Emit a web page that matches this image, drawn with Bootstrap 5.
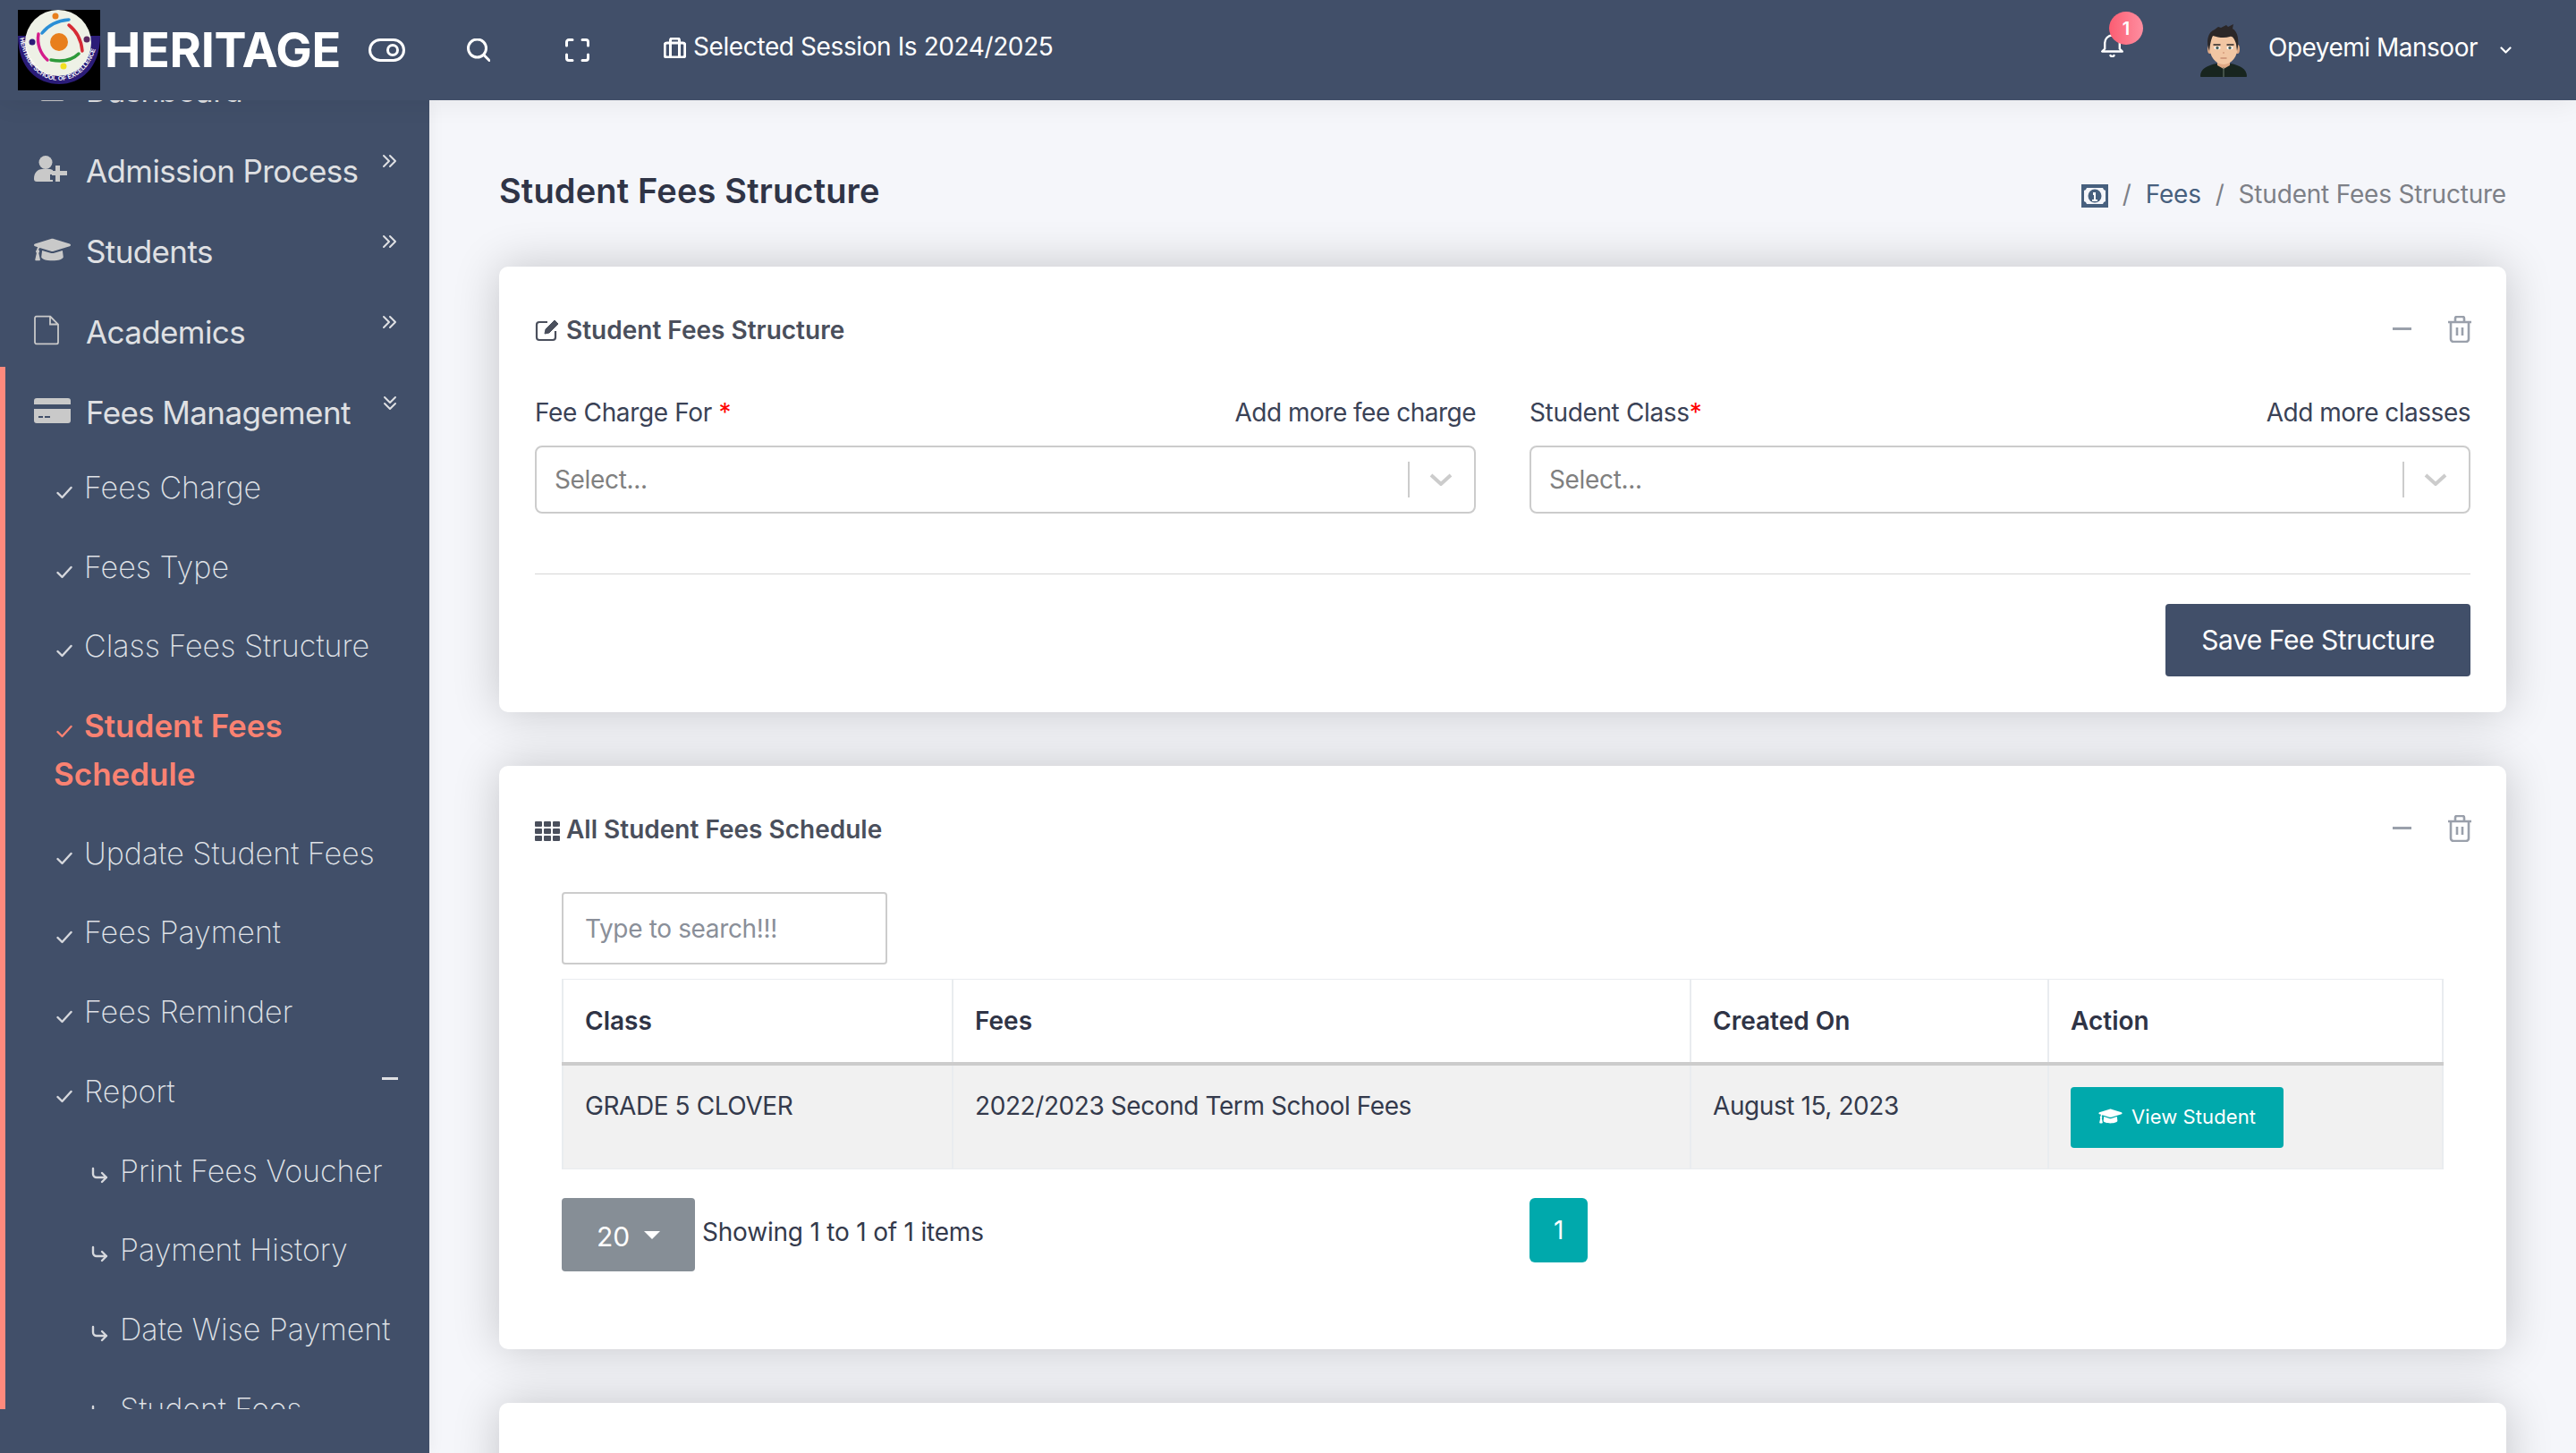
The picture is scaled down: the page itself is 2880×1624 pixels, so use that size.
<!DOCTYPE html>
<html lang="en">
<head>
<meta charset="utf-8">
<title>Student Fees Structure</title>
<link rel="stylesheet" href="https://cdn.jsdelivr.net/npm/bootstrap@5.3.0/dist/css/bootstrap.min.css">
<style>
html,body{height:100%;overflow:hidden;}
body{font-family:Inter,"Liberation Sans",sans-serif;font-size:28px;color:#343a4c;background:#f5f6fa;letter-spacing:-.35px;}
.hs-top{height:112px;background:#414f69;color:#fff;position:relative;z-index:3;box-shadow:0 0 30px rgba(0,0,0,.08);padding-left:20px;}
.hs-logo{width:92px;height:90px;flex:none;}
.hs-brand{font-size:54px;font-weight:700;line-height:1;margin-left:5px;letter-spacing:-.3px;width:288px;white-space:nowrap;}
.hs-ticon{stroke:#fff;fill:none;stroke-width:3;stroke-linecap:round;stroke-linejoin:round;flex:none;}
.hs-tb1{margin-left:7px;}
.hs-tb2{margin-left:69px;}
.hs-tb3{margin-left:84px;}
.hs-tb4{margin-left:83px;margin-bottom:6px;}
.hs-sess{font-size:28px;margin-left:8px;line-height:1;padding-bottom:8px;letter-spacing:-.4px;}
.hs-bell{position:relative;width:25px;height:26px;margin:0 86px 10px 0;}
.hs-bell svg{display:block;stroke-width:2.4;}
.hs-bellbadge{position:absolute;left:9px;top:-25px;width:38px;height:37px;border-radius:50%;background:linear-gradient(90deg,#fb5d72,#fe8ea0);font-size:20px;font-weight:600;display:flex;align-items:center;justify-content:center;letter-spacing:0;}
.hs-name{font-size:28px;margin-left:24px;padding-bottom:6px;letter-spacing:-.5px;}
.hs-chev{margin-left:25px;margin-right:72px;stroke-width:2.2;}
.hs-wrap{height:1512px;}
.hs-side{width:480px;flex:none;background:#414f69;height:100%;position:relative;z-index:2;box-shadow:0 0 18px rgba(0,0,0,.06);}
.hs-scroll{height:1463px;overflow:hidden;border:0;}
.hs-rail{position:absolute;left:0;top:298px;width:6px;height:1165px;background:#ff8a7d;}
.hs-menu{margin-top:-56px;list-style:none;padding:0;}
.hs-mi{height:90px;display:flex;align-items:center;font-size:35px;color:#dfe0e3;position:relative;padding-left:96px;font-weight:400;letter-spacing:-.62px;}
.hs-mic{position:absolute;left:38px;top:50%;transform:translateY(-50%);margin-top:-2px;fill:#c9c9c9;}
.hs-more{position:absolute;left:427px;top:26px;stroke:#dfe0e3;fill:none;stroke-width:2;stroke-linecap:round;stroke-linejoin:round;}
.hs-si{font-size:34px;font-weight:200;color:#dfe1e6;line-height:54px;padding:17px 0 17.7px 60px;position:relative;letter-spacing:0;}
.hs-mi+.hs-si{margin-top:-5px;}
.hs-si.hs-on{color:#fa8272;font-weight:600;font-size:35px;letter-spacing:0;padding-right:60px;}
.hs-ck{display:inline-block;vertical-align:-1px;margin-right:13px;margin-left:3px;stroke:#d6d8dd;fill:none;stroke-width:2.400;stroke-linecap:round;stroke-linejoin:round;}
.hs-on .hs-ck{stroke:#fa8272;}
.hs-ssi{padding-left:102px;}
.hs-ar{margin-left:0;margin-right:13px;vertical-align:-3px;}
.hs-minus{position:absolute;left:427px;top:28px;width:18px;height:3px;background:#dfe0e3;}
.hs-main{flex:1;min-width:0;padding:60px 78px 0;height:100%;overflow:hidden;}
.hs-head{height:82px;margin-bottom:44px;}
.hs-title{font-size:38px;font-weight:600;color:#2f3446;margin:0;line-height:1;letter-spacing:.15px;}
.hs-bc{margin:0;font-size:28px;letter-spacing:-.2px;--bs-breadcrumb-divider-color:#7d8087;--bs-breadcrumb-item-active-color:#7d8087;--bs-breadcrumb-item-padding-x:16px;align-items:center;padding-top:7px;}
.hs-bc a{color:#47607e;text-decoration:none;}
.hs-card{border:0;border-radius:10px;box-shadow:0 0 52px rgba(0,0,0,.2);margin-bottom:60px;color:#343a4c;}
.hs-chead{height:141px;background:none;border:0;padding:0 38px 0 40px;}
.hs-ctitle{font-size:28px;font-weight:600;color:#4a4f5c;line-height:1;letter-spacing:0;}
.hs-ctitle svg{margin-right:7px;vertical-align:-3px;}
.hs-acts{padding-bottom:2px;}
.hs-minus2{width:21px;height:3px;background:#9aa0ab;margin-right:40px;}
.hs-cbody1{padding:3px 40px 40px;}
.hs-cols{--bs-gutter-x:60px;}
.hs-lab{font-size:28px;line-height:38px;margin-bottom:18px;color:#3a4256;}
.hs-lab>span+span{letter-spacing:-.5px;}
.hs-req{color:#f00;}
.hs-sel{height:76px;border:2px solid #ccc;border-radius:8px;padding-left:20px;color:#808080;background:#fff;}
.hs-sep{width:2px;height:40px;background:#ccc;}
.hs-sarrow{width:72px;stroke:#ccc;fill:none;stroke-width:4;}
.hs-hr{margin:67px 0 33px;border-color:#bbb;opacity:.6;}
.hs-save{background:#414f69;border:0;border-radius:4px;color:#fff;font-size:30px;height:81px;padding:0 40px;letter-spacing:-.45px;}
.hs-save:hover{background:#414f69;color:#fff;}
.hs-cbody2{padding:0 70px 87px;}
.hs-search{width:364px;height:81px;border:2px solid #ccc;border-radius:4px;padding:0 24px;font-size:28px;margin-bottom:16px;letter-spacing:-.35px;}
.hs-search::placeholder{color:#8a8f99;}
.hs-tb{table-layout:fixed;margin-bottom:32px;--bs-table-border-color:#e9ecef;border-width:2px;color:#343a4c;width:100%;font-size:28px;}
.hs-tb>:not(caption)>*>*{border-width:0 2px;padding:24px;}
.hs-tb th{font-weight:600;font-size:28px;color:#2f3446;height:94px;vertical-align:middle;border-bottom:4px solid #ccc!important;letter-spacing:0;}
.hs-tb>tbody>tr>td{background:#f1f1f1;height:118px;box-shadow:none;line-height:1.25;padding-top:28px;padding-bottom:0;letter-spacing:-.42px;}
.hs-c1{width:436px;}.hs-c2{width:825px;}.hs-c3{width:400px;}
.hs-view{background:#00a9ac;border:0;color:#fff;border-radius:4px;font-size:22px;height:68px;width:238px;padding:0;letter-spacing:.1px;margin-top:-4px;}
.hs-view:hover{background:#00a9ac;color:#fff;}
.hs-view svg{fill:#fff;margin-right:10px;vertical-align:-2px;}
.hs-pgrow{position:relative;}
.hs-dd{background:#868e96;border:0;color:#fff;width:149px;height:82px;border-radius:4px;font-size:30px;padding:4px 0 0;}
.hs-dd:hover{background:#868e96;color:#fff;}
.hs-dd::after{margin-left:16px;}
.hs-info{margin-left:8px;font-size:28px;padding-bottom:6px;letter-spacing:-.2px;}
.hs-pg{position:absolute;left:1082px;top:0;margin:0;}
.hs-pg .page-link{background:#00a9ac;border:0;color:#fff;width:65px;height:72px;border-radius:6px!important;font-size:28px;display:flex;align-items:center;justify-content:center;padding:0;}
.hs-card3{height:120px;}
</style>
</head>
<body>
<header class="hs-top d-flex align-items-center">
  <svg class="hs-logo" viewBox="0 0 92 90">
    <defs><path id="hs-arc" d="M2 30C6 60 24 79 46 79S86 60 90 30"/></defs>
    <rect width="92" height="90" fill="#000"/>
    <path d="M0 29H92C92 65 70 83 46 83S0 65 0 29z" fill="#2b1c78"/>
    <circle cx="45" cy="37" r="37" fill="#eef1e6"/>
    <circle cx="46" cy="36" r="10" fill="#e87f1c"/>
    <path d="M27 26C34 17 45 12 57 11" fill="none" stroke="#2a8fd6" stroke-width="3.500" stroke-linecap="round"/>
    <path d="M57 17C66 24 71 35 72 46" fill="none" stroke="#d62b36" stroke-width="3.500" stroke-linecap="round"/>
    <path d="M68 49C60 57 48 58 37 56" fill="none" stroke="#2d9a3a" stroke-width="3.500" stroke-linecap="round"/>
    <path d="M23 27C21 38 25 49 33 56" fill="none" stroke="#d41e8b" stroke-width="3.500" stroke-linecap="round"/>
    <circle cx="42" cy="7" r="3.500" fill="#e87f1c"/><circle cx="16" cy="36" r="3.500" fill="#2b1c78"/><circle cx="77" cy="33" r="3.500" fill="#5b2a60"/><circle cx="51" cy="63" r="3.500" fill="#f2e020"/>
    <text font-size="7" fill="#fff" font-family="Liberation Sans" font-weight="700" letter-spacing="0"><textPath href="#hs-arc" startOffset="1%">HERITAGE SCHOOL OF EXCELLENCE</textPath></text>
  </svg>
  <div class="hs-brand">HERITAGE</div>
  <svg class="hs-ticon hs-tb1" width="41" height="26" viewBox="0 0 41 26"><rect x="1.500" y="1.500" width="38" height="23" rx="11.500"/><circle cx="27" cy="13" r="5.500"/></svg>
  <svg class="hs-ticon hs-tb2" width="26" height="26" viewBox="0 0 26 26"><circle cx="11.500" cy="11" r="10"/><path d="M19 18.500l6 6"/></svg>
  <svg class="hs-ticon hs-tb3" width="27" height="26" viewBox="0 0 27 26"><path d="M1.500 8V4a2.500 2.500 0 0 1 2.500-2.500h4M19 1.500h4A2.500 2.500 0 0 1 25.500 4v4M25.500 18v4a2.500 2.500 0 0 1-2.500 2.500h-4M8 24.500H4A2.500 2.500 0 0 1 1.500 22v-4"/></svg>
  <svg class="hs-ticon hs-tb4" width="25" height="23" viewBox="0 0 25 23" stroke-width="2.400"><rect x="1.200" y="6" width="22.600" height="16" rx="2.500"/><path d="M7.500 22V3a2 2 0 0 1 2-2h6a2 2 0 0 1 2 2v19"/></svg>
  <div class="hs-sess">Selected Session Is 2024/2025</div>
  <div class="ms-auto d-flex align-items-center">
    <div class="hs-bell">
      <svg class="hs-ticon" width="25" height="26" viewBox="0 0 25 26"><path d="M1.200 19.500h22.600l-3-3V10a8.300 8.500 0 0 0-16.600 0v6.500zM10.500 24c1 1.500 3 1.500 4 0"/></svg>
      <span class="hs-bellbadge">1</span>
    </div>
    <svg width="52" height="59" viewBox="0 0 52 59">
      <path d="M0 58c0-8 8-12 18-14l8 4 8-4c10 2 18 6 18 14 0 1-1 1-1 1H1s-1 0-1-1z" fill="#18251f"/>
      <path d="M19 38h14v8l-7 4-7-4z" fill="#dfa985"/>
      <path d="M25.500 48h1v11h-1z" fill="#6d7c70"/>
      <ellipse cx="10.500" cy="28" rx="2.500" ry="5" fill="#dfa985"/><ellipse cx="41.500" cy="28" rx="2.500" ry="5" fill="#dfa985"/>
      <path d="M10 24c0 12 7 21 16 21s16-9 16-21S34 8 26 8 10 12 10 24z" fill="#f1c6a3"/>
      <path d="M10 30C6 20 8 9 16 6l4-3 3 1 6-3 2 2 6-3-1 5c6 3 8 14 5 25l-1-8c-2-6-4-9-7-8-6 2-13 1-19-1-2 4-3 9-4 17z" fill="#2b2728"/>
      <ellipse cx="19" cy="26.500" rx="3.500" ry="1.800" fill="#fff"/><ellipse cx="33" cy="26.500" rx="3.500" ry="1.800" fill="#fff"/>
      <circle cx="19" cy="26.500" r="1.700" fill="#47605a"/><circle cx="33" cy="26.500" r="1.700" fill="#47605a"/>
      <path d="M14.500 23l8 0M29.500 23l8 0" stroke="#2b2728" stroke-width="1.500"/><path d="M22.500 38h7" stroke="#c07f66" stroke-width="1.200"/><path d="M25 32h2" stroke="#d79d7e" stroke-width="1.500"/>
    </svg>
    <div class="hs-name">Opeyemi Mansoor</div>
    <svg class="hs-ticon hs-chev" width="13" height="9" viewBox="0 0 13 9"><path d="M1.500 1.500l5 5 5-5"/></svg>
  </div>
</header>
<div class="hs-wrap d-flex">
  <aside class="hs-side">
    <span class="hs-rail"></span>
    <div class="hs-scroll">
      <ul class="hs-menu">
        <li class="hs-mi"><svg class="hs-mic" width="34" height="30" viewBox="0 0 34 30"><rect x="7" y="1" width="27" height="28" rx="3"/></svg>Dashboard</li>
        <li class="hs-mi"><svg class="hs-mic" width="38" height="30" viewBox="0 0 38 30"><circle cx="13" cy="7.500" r="7.500"/><path d="M0 26c0-7 4-11 9-11h8c1 0 3 .5 4 1v5h-3v6h3v2H3c-2 0-3-1-3-3z"/><path d="M24 11h5v6h8v5h-8v7h-5v-7h-4v-5h4z"/></svg>Admission Process<svg class="hs-more" width="18" height="16" viewBox="0 0 18 16"><path d="M2 2l6 6-6 6M9 2l6 6-6 6"/></svg></li>
        <li class="hs-mi"><svg class="hs-mic" width="41" height="34" viewBox="0 0 640 512"><path d="M622.34 153.2L343.4 67.5c-15.2-4.67-31.6-4.67-46.79 0L17.66 153.2c-23.54 7.23-23.54 38.36 0 45.59l48.63 14.94c-10.67 13.19-17.23 29.28-17.88 46.9C38.78 266.15 32 276.11 32 288c0 10.78 5.68 19.85 13.86 25.65L20.33 428.53C18.11 438.52 25.71 448 35.94 448h56.11c10.24 0 17.84-9.48 15.62-19.47L82.14 313.65C90.32 307.85 96 298.78 96 288c0-11.57-6.47-21.25-15.66-26.87.76-15.02 8.44-28.3 20.69-36.72L296.6 284.5c9.06 2.78 26.44 6.25 46.79 0l278.95-85.7c23.55-7.24 23.55-38.36 0-45.6zM352.79 315.09c-28.53 8.76-52.84 3.92-65.59 0l-145.02-44.55L128 384c0 35.35 85.96 64 192 64s192-28.65 192-64l-14.18-113.47-145.03 44.56z"/></svg>Students<svg class="hs-more" width="18" height="16" viewBox="0 0 18 16"><path d="M2 2l6 6-6 6M9 2l6 6-6 6"/></svg></li>
        <li class="hs-mi"><svg class="hs-mic" width="28" height="33" viewBox="0 0 28 33"><path d="M1 3a2 2 0 0 1 2-2h15l9 9v20a2 2 0 0 1-2 2H3a2 2 0 0 1-2-2zM18 1v9h9" fill="none" stroke="#c9c9c9" stroke-width="1.800"/></svg>Academics<svg class="hs-more" width="18" height="16" viewBox="0 0 18 16"><path d="M2 2l6 6-6 6M9 2l6 6-6 6"/></svg></li>
        <li class="hs-mi"><svg class="hs-mic" width="41" height="28" viewBox="0 0 41 28"><path d="M3 0h35a3 3 0 0 1 3 3v4H0V3a3 3 0 0 1 3-3zM0 12h41v13a3 3 0 0 1-3 3H3a3 3 0 0 1-3-3z"/><path d="M5 21h5M12 21h6" stroke="#414f69" stroke-width="2"/></svg>Fees Management<svg class="hs-more" width="18" height="18" viewBox="0 0 18 18"><path d="M3 2l6 6 6-6M3 9l6 6 6-6"/></svg></li>
        <li class="hs-si"><svg class="hs-ck" width="18" height="15" viewBox="0 0 18 15"><path d="M1.500 8l5 5 10-11"/></svg>Fees Charge</li>
        <li class="hs-si"><svg class="hs-ck" width="18" height="15" viewBox="0 0 18 15"><path d="M1.500 8l5 5 10-11"/></svg>Fees Type</li>
        <li class="hs-si"><svg class="hs-ck" width="18" height="15" viewBox="0 0 18 15"><path d="M1.500 8l5 5 10-11"/></svg>Class Fees Structure</li>
        <li class="hs-si hs-on"><svg class="hs-ck" width="18" height="15" viewBox="0 0 18 15"><path d="M1.500 8l5 5 10-11"/></svg>Student Fees Schedule</li>
        <li class="hs-si"><svg class="hs-ck" width="18" height="15" viewBox="0 0 18 15"><path d="M1.500 8l5 5 10-11"/></svg>Update Student Fees</li>
        <li class="hs-si"><svg class="hs-ck" width="18" height="15" viewBox="0 0 18 15"><path d="M1.500 8l5 5 10-11"/></svg>Fees Payment</li>
        <li class="hs-si"><svg class="hs-ck" width="18" height="15" viewBox="0 0 18 15"><path d="M1.500 8l5 5 10-11"/></svg>Fees Reminder</li>
        <li class="hs-si"><svg class="hs-ck" width="18" height="15" viewBox="0 0 18 15"><path d="M1.500 8l5 5 10-11"/></svg>Report<span class="hs-minus"></span></li>
        <li class="hs-si hs-ssi"><svg class="hs-ck hs-ar" width="19" height="20" viewBox="0 0 19 20"><path d="M2 2v6a4 4 0 0 0 4 4h11M12 7l5 5-5 5"/></svg>Print Fees Voucher</li>
        <li class="hs-si hs-ssi"><svg class="hs-ck hs-ar" width="19" height="20" viewBox="0 0 19 20"><path d="M2 2v6a4 4 0 0 0 4 4h11M12 7l5 5-5 5"/></svg>Payment History</li>
        <li class="hs-si hs-ssi"><svg class="hs-ck hs-ar" width="19" height="20" viewBox="0 0 19 20"><path d="M2 2v6a4 4 0 0 0 4 4h11M12 7l5 5-5 5"/></svg>Date Wise Payment</li>
        <li class="hs-si hs-ssi"><svg class="hs-ck hs-ar" width="19" height="20" viewBox="0 0 19 20"><path d="M2 2v6a4 4 0 0 0 4 4h11M12 7l5 5-5 5"/></svg>Student Fees</li>
      </ul>
    </div>
  </aside>
  <main class="hs-main">
    <div class="hs-head d-flex justify-content-between align-items-center">
      <h1 class="hs-title">Student Fees Structure</h1>
      <ol class="breadcrumb hs-bc">
        <li class="breadcrumb-item d-flex align-items-center"><a href="#"><svg width="30" height="26" viewBox="0 0 30 26"><path fill-rule="evenodd" d="M0 0h30v26H0zM6 4a4 4 0 0 1-3 3v12a4 4 0 0 1 3 3h18a4 4 0 0 1 3-3V7a4 4 0 0 1-3-3z" fill="#47607e"/><circle cx="15" cy="13" r="7.500" fill="#47607e"/><path d="M13 9h3v8h2v2h-6v-2h2v-5h-1z" fill="#fff"/></svg></a></li>
        <li class="breadcrumb-item"><a href="#">Fees</a></li>
        <li class="breadcrumb-item active">Student Fees Structure</li>
      </ol>
    </div>

    <section class="card hs-card">
      <div class="card-header hs-chead d-flex justify-content-between align-items-center">
        <div class="hs-ctitle"><svg width="28" height="26" viewBox="0 0 28 26" fill="none" stroke="#4a4f5c" stroke-width="2.200"><path d="M23 14v7a3 3 0 0 1-3 3H5a3 3 0 0 1-3-3V7a3 3 0 0 1 3-3h9"/><path d="M11 17l1-5L22 2l4 4-10 10z" fill="#4a4f5c" stroke-width="1"/></svg>Student Fees Structure</div>
        <div class="d-flex align-items-center hs-acts"><span class="hs-minus2"></span><svg width="28" height="30" viewBox="0 0 28 30" fill="none" stroke="#9aa0ab" stroke-width="2.600" stroke-linejoin="round"><path d="M1 7h26M4 7v19a3 3 0 0 0 3 3h14a3 3 0 0 0 3-3V7M9 7V3a2 2 0 0 1 2-2h6a2 2 0 0 1 2 2v4M11 13v9M17 13v9"/></svg></div>
      </div>
      <div class="card-body hs-cbody1">
        <div class="row hs-cols">
          <div class="col-6">
            <div class="d-flex justify-content-between hs-lab"><span>Fee Charge For <span class="hs-req">*</span></span><span>Add more fee charge</span></div>
            <div class="d-flex align-items-center hs-sel"><span class="flex-grow-1">Select...</span><span class="hs-sep"></span><svg class="hs-sarrow" height="14" viewBox="0 0 72 14"><path d="M24 2l11 10 11-10"/></svg></div>
          </div>
          <div class="col-6">
            <div class="d-flex justify-content-between hs-lab"><span>Student Class<span class="hs-req">*</span></span><span>Add more classes</span></div>
            <div class="d-flex align-items-center hs-sel"><span class="flex-grow-1">Select...</span><span class="hs-sep"></span><svg class="hs-sarrow" height="14" viewBox="0 0 72 14"><path d="M24 2l11 10 11-10"/></svg></div>
          </div>
        </div>
        <hr class="hs-hr">
        <div class="d-flex justify-content-end"><button type="button" class="btn hs-save">Save Fee Structure</button></div>
      </div>
    </section>

    <section class="card hs-card">
      <div class="card-header hs-chead d-flex justify-content-between align-items-center">
        <div class="hs-ctitle"><svg width="28" height="22" viewBox="0 0 28 22" fill="#4a4f5c"><rect width="8" height="6" rx="1"/><rect x="10" width="8" height="6" rx="1"/><rect x="20" width="8" height="6" rx="1"/><rect y="8" width="8" height="6" rx="1"/><rect x="10" y="8" width="8" height="6" rx="1"/><rect x="20" y="8" width="8" height="6" rx="1"/><rect y="16" width="8" height="6" rx="1"/><rect x="10" y="16" width="8" height="6" rx="1"/><rect x="20" y="16" width="8" height="6" rx="1"/></svg>All Student Fees Schedule</div>
        <div class="d-flex align-items-center hs-acts"><span class="hs-minus2"></span><svg width="28" height="30" viewBox="0 0 28 30" fill="none" stroke="#9aa0ab" stroke-width="2.600" stroke-linejoin="round"><path d="M1 7h26M4 7v19a3 3 0 0 0 3 3h14a3 3 0 0 0 3-3V7M9 7V3a2 2 0 0 1 2-2h6a2 2 0 0 1 2 2v4M11 13v9M17 13v9"/></svg></div>
      </div>
      <div class="card-body hs-cbody2">
        <input class="form-control hs-search" type="text" placeholder="Type to search!!!">
        <table class="table table-bordered hs-tb">
          <thead><tr><th class="hs-c1">Class</th><th class="hs-c2">Fees</th><th class="hs-c3">Created On</th><th>Action</th></tr></thead>
          <tbody><tr><td>GRADE 5 CLOVER</td><td>2022/2023 Second Term School Fees</td><td>August 15, 2023</td><td><button type="button" class="btn hs-view"><svg width="27" height="21" viewBox="0 0 640 512"><path d="M622.34 153.2L343.4 67.5c-15.2-4.67-31.6-4.67-46.79 0L17.66 153.2c-23.54 7.23-23.54 38.36 0 45.59l48.63 14.94c-10.67 13.19-17.23 29.28-17.88 46.9C38.78 266.15 32 276.11 32 288c0 10.78 5.68 19.85 13.86 25.65L20.33 428.53C18.11 438.52 25.71 448 35.94 448h56.11c10.24 0 17.84-9.48 15.62-19.47L82.14 313.65C90.32 307.85 96 298.78 96 288c0-11.57-6.47-21.25-15.66-26.87.76-15.02 8.44-28.3 20.69-36.72L296.6 284.5c9.06 2.78 26.44 6.25 46.79 0l278.95-85.7c23.55-7.24 23.55-38.36 0-45.6zM352.79 315.09c-28.53 8.76-52.84 3.92-65.59 0l-145.02-44.55L128 384c0 35.35 85.96 64 192 64s192-28.65 192-64l-14.18-113.47-145.03 44.56z"/></svg>View Student</button></td></tr></tbody>
        </table>
        <div class="d-flex align-items-center hs-pgrow">
          <button type="button" class="btn dropdown-toggle hs-dd">20</button>
          <span class="hs-info">Showing 1 to 1 of 1 items</span>
          <ul class="pagination hs-pg"><li class="page-item active"><a class="page-link" href="#">1</a></li></ul>
        </div>
      </div>
    </section>

    <section class="card hs-card hs-card3"></section>
  </main>
</div>
<script src="https://cdn.jsdelivr.net/npm/bootstrap@5.3.0/dist/js/bootstrap.bundle.min.js"></script>
</body>
</html>
